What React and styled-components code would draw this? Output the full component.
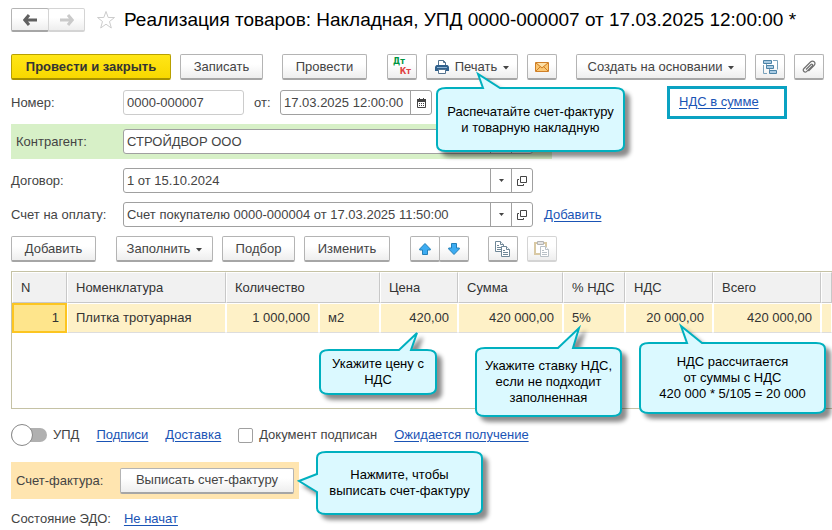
import React from 'react'
import styled, { createGlobalStyle, css } from 'styled-components'

function App() {
    return (
        <Page>
            <GlobalStyle />
            <TitleBar>
                <ButtonGroup>
                    <Button $w={38} $h={24} aria-label="Назад"><ArrowIcon color="#606060" /></Button>
                    <Button $w={37} $h={24} disabled aria-label="Вперед"><ArrowIcon color="#cacaca" flip /></Button>
                </ButtonGroup>
                <StarButton aria-label="В избранное">
                    <svg width="20" height="20" viewBox="0 0 20 20">
                        <path d="M10 1.5l2.2 6h6.3l-5 4 1.8 6.5-5.3-3.8-5.3 3.8 1.8-6.5-5-4h6.3z" fill="#fff" stroke="#ccc" />
                    </svg>
                </StarButton>
                <Title>Реализация товаров: Накладная, УПД 0000-000007 от 17.03.2025 12:00:00 *</Title>
            </TitleBar>

            <Toolbar>
                <PrimaryButton $w={160}>Провести и закрыть</PrimaryButton>
                <Button $w={83}>Записать</Button>
                <Button $w={85} $gap={10}>Провести</Button>
                <Button $w={30} $gap={11} aria-label="Проводки">
                    <Postings><b>Дт</b><i>Кт</i></Postings>
                </Button>
                <Anchor>
                    <Button $w={92}><PrinterIcon />Печать<Caret /></Button>
                    <Callout left={11} top={34} width={187} height={63} tail={[[46, 0], [41, -14], [63, 0]]}>
                        Распечатайте счет-фактуру<br />и товарную накладную
                    </Callout>
                </Anchor>
                <Button $w={30} aria-label="Отправить"><MailIcon /></Button>
                <Button $w={170} $gap={10}>Создать на основании<Caret /></Button>
                <Button $w={30} aria-label="Структура"><TreeIcon /></Button>
                <Button $w={30} aria-label="Вложения"><ClipIcon /></Button>
            </Toolbar>

            <FormRow>
                <Label htmlFor="number">Номер:</Label>
                <NumberInput id="number" defaultValue="0000-000007" />
                <ShortLabel htmlFor="date">от:</ShortLabel>
                <Field $w={152}>
                    <FieldInput id="date" defaultValue="17.03.2025 12:00:00" />
                    <FieldButton aria-label="Календарь"><CalendarIcon /></FieldButton>
                </Field>
                <TaxBox><Link href="#tax">НДС в сумме</Link></TaxBox>
            </FormRow>

            <PartnerRow>
                <Label htmlFor="partner">Контрагент:</Label>
                <Combo id="partner" value="СТРОЙДВОР ООО" />
            </PartnerRow>

            <FormRow>
                <Label htmlFor="contract">Договор:</Label>
                <Combo id="contract" value="1 от 15.10.2024" />
            </FormRow>

            <FormRow>
                <Label htmlFor="invoice">Счет на оплату:</Label>
                <Combo id="invoice" value="Счет покупателю 0000-000004 от 17.03.2025 11:50:00" />
                <Link href="#add">Добавить</Link>
            </FormRow>

            <Toolbar>
                <Button $w={85}>Добавить</Button>
                <Button $w={97} $gap={11}>Заполнить<Caret /></Button>
                <Button $w={73}>Подбор</Button>
                <Button $w={86}>Изменить</Button>
                <MoveGroup>
                    <Button $w={30} aria-label="Вверх"><MoveIcon /></Button>
                    <Button $w={30} aria-label="Вниз"><MoveIcon down /></Button>
                </MoveGroup>
                <Button $w={30} $gap={10} aria-label="Копировать"><CopyIcon /></Button>
                <Button $w={30} disabled aria-label="Вставить"><PasteIcon /></Button>
            </Toolbar>

            <Grid>
                <Table>
                    <colgroup>
                        <Col $w={55} /><Col $w={159} /><Col $w={93} /><Col $w={61} /><Col $w={78} />
                        <Col $w={105} /><Col $w={62} /><Col $w={88} /><Col $w={108} /><col />
                    </colgroup>
                    <thead>
                        <tr>
                            <Th>N</Th>
                            <Th>Номенклатура</Th>
                            <Th colSpan={2}>Количество</Th>
                            <Th>Цена</Th>
                            <Th>Сумма</Th>
                            <Th>% НДС</Th>
                            <Th>НДС</Th>
                            <Th>Всего</Th>
                            <Th aria-label="Прочее" />
                        </tr>
                    </thead>
                    <tbody>
                        <tr>
                            <Td $right $selected>1</Td>
                            <Td>Плитка тротуарная</Td>
                            <Td $right>1 000,000</Td>
                            <Td>м2</Td>
                            <Td $right>
                                420,00
                                <Callout left={-61} top={46} width={116} height={44} tail={[[79, 0], [97, -17], [91, 0]]}>
                                    Укажите цену с<br />НДС
                                </Callout>
                            </Td>
                            <Td $right>420 000,00</Td>
                            <Td>
                                5%
                                <Callout left={-88} top={44} width={145} height={68} tail={[[82, 0], [103, -20], [97, 0]]}>
                                    Укажите ставку НДС,<br />если не подходит<br />заполненная
                                </Callout>
                            </Td>
                            <Td $right>
                                20 000,00
                                <Callout left={14} top={39} width={185} height={70} tail={[[47, 0], [41, -17], [62, 0]]}>
                                    НДС рассчитается<br />от суммы с НДС<br />420 000 * 5/105 = 20 000
                                </Callout>
                            </Td>
                            <Td $right>420 000,00</Td>
                            <Td />
                        </tr>
                    </tbody>
                </Table>
            </Grid>

            <Options>
                <SwitchLabel><Switch type="checkbox" role="switch" />УПД</SwitchLabel>
                <Link href="#signs">Подписи</Link>
                <Link href="#delivery">Доставка</Link>
                <CheckLabel><Check type="checkbox" />Документ подписан</CheckLabel>
                <Link href="#pending">Ожидается получение</Link>
            </Options>

            <InvoiceRow>
                <span>Счет-фактура:</span>
                <Button $w={174}>Выписать счет-фактуру</Button>
                <Callout left={306} top={-10} width={165} height={62} tailSide="left" tail={[[0, 40], [-18, 29], [0, 22]]}>
                    Нажмите, чтобы<br />выписать счет-фактуру
                </Callout>
            </InvoiceRow>

            <Status>
                <span>Состояние ЭДО:</span>
                <Link href="#edo">Не начат</Link>
            </Status>
        </Page>
    )
}

export default App

function Combo({ id, value }) {
    return (
        <Field $w={410}>
            <FieldInput id={id} defaultValue={value} />
            <FieldButton aria-label="Выбрать">
                <svg width="5" height="3" viewBox="0 0 5 3"><path d="M0 0h5L2.5 3z" fill="#444" /></svg>
            </FieldButton>
            <FieldButton aria-label="Открыть">
                <svg width="10" height="10" viewBox="0 0 10 10" fill="none" stroke="#444">
                    <path d="M3.5 .5h6v6h-6zM2 3.5H.5v6h6V8" />
                </svg>
            </FieldButton>
        </Field>
    )
}

// speech bubble: rounded box with a pointer on its top or left side
function Callout({ left, top, width: w, height: h, tail, tailSide = 'top', children }) {
    const points = tail.map(p => p.join(' ')).join(' L')
    const topEdge = tailSide === 'top' ? `L${points}` : ''
    const leftEdge = tailSide === 'left' ? `L${points}` : ''
    const d = `M9 0 ${topEdge} L${w - 9} 0 Q${w} 0 ${w} 6 L${w} ${h - 6} Q${w} ${h} ${w - 9} ${h} L9 ${h} Q0 ${h} 0 ${h - 6} ${leftEdge} L0 6 Q0 0 9 0Z`
    return (
        <Bubble $left={left} $top={top} $w={w} $h={h}>
            <svg width={w} height={h}>
                <path d={d} fill="#dbf9ff" stroke="#00b0bf" strokeWidth="2" />
            </svg>
            <BubbleText>{children}</BubbleText>
        </Bubble>
    )
}

function Caret() {
    return <CaretSvg width="6" height="4" viewBox="0 0 6 4"><path d="M0 0h6L3 3.5z" fill="#444" /></CaretSvg>
}

function ArrowIcon({ color, flip }) {
    return (
        <svg width="14" height="12" viewBox="0 0 14 12">
            <path
                d="M6 1L1.8 6 6 11M2 6h12"
                transform={flip ? 'translate(14 0) scale(-1 1)' : undefined}
                fill="none" stroke={color} strokeWidth="3"
            />
        </svg>
    )
}

function PrinterIcon() {
    return (
        <svg width="14" height="14" viewBox="0 0 14 14">
            <path d="M3.5 6V.5h5l2 2V6" fill="#fff" stroke="#54738f" />
            <path d="M8.5 .5v2h2" fill="none" stroke="#54738f" />
            <path d="M1.5 5h11L14 6.500V11H0V6.5z" fill="#2f608c" />
            <path d="M2 7.5h10" stroke="#8db3d3" />
            <path d="M3.5 9.5h7v4h-7z" fill="#fff" stroke="#54738f" />
        </svg>
    )
}

function MailIcon() {
    return (
        <svg width="14" height="10" viewBox="0 0 14 10">
            <path d="M.5 .5h13v9H.5z" fill="#fbc671" stroke="#cf7f27" />
            <path d="M2 1h10L7 5z" fill="#fde0a8" />
            <path d="M1 1l6 5 6-5M1 9l4.500-4.500M13 9L8.500 4.500" fill="none" stroke="#cf7f27" />
        </svg>
    )
}

function TreeIcon() {
    return (
        <svg width="15" height="14" viewBox="0 0 15 14" fill="none" stroke="#4c83a6">
            <path d="M10 .5h4.5v9M4 13.5H.5V5M3.500 4v3h1M6.500 9v3h1" stroke="#7ba2bb" />
            <path d="M.5 .5h8v3h-8zM3.5 5.5h7v3h-7zM6.5 10.5h7v3h-7z" fill="#a9cbe3" />
        </svg>
    )
}

function ClipIcon() {
    return (
        <svg width="14" height="14" viewBox="0 0 14 14">
            <path
                d="M4 9.500l5-5c1-1 2.300.3 1.300 1.300l-5.500 5.500c-2 2-4.800-.6-2.800-2.800L8.500 2c2.600-2.500 6 .8 3.500 3.500l-5.500 5.600"
                fill="none" stroke="#707070" strokeWidth="1.2"
            />
        </svg>
    )
}

function CalendarIcon() {
    return (
        <svg width="9" height="10" viewBox="0 0 9 10">
            <path d="M.5 1.5h8v8h-8z" fill="#fff" stroke="#444" />
            <path d="M0 1h9v3H0zM2 0h1v2H2zM6 0h1v2H6z" fill="#444" />
            <path d="M2 5.5h5M2 7.5h5" stroke="#444" strokeDasharray="1 1" />
        </svg>
    )
}

function MoveIcon({ down }) {
    return (
        <svg width="12" height="12" viewBox="0 0 12 12">
            <path
                d="M6 .5l5.300 5.500v1H8.500v4.500h-5V7H.700V6z"
                transform={down ? 'rotate(180 6 6)' : undefined}
                fill="#3dacf2" stroke="#2480b8"
            />
        </svg>
    )
}

function CopyIcon() {
    return (
        <svg width="16" height="16" viewBox="0 0 16 16" fill="#fff" stroke="#6f8797">
            <path d="M.5 .5h5l3 3v7h-8z" />
            <path d="M5.500 .5v3h3M2 4.500h2M2 6.500h5M2 8.500h5" />
            <path d="M6.500 5.500h5l3 3v7h-8z" />
            <path d="M11.500 5.500v3h3M8 9.500h2M8 11.500h5M8 13.500h5" />
        </svg>
    )
}

function PasteIcon() {
    return (
        <svg width="16" height="16" viewBox="0 0 16 16" fill="#fff">
            <path d="M1 2h11v11H1z" stroke="#d9c9a4" strokeWidth="2" />
            <path d="M3.5 .5h6v3h-6z" fill="#e4e4e4" stroke="#b4b4b4" />
            <path d="M6.500 5.500h5l3 3v7h-8z" stroke="#b9c1c7" />
            <path d="M11.500 5.500v3h3M8 9.500h2M8 11.500h5M8 13.500h5" stroke="#b9c1c7" />
        </svg>
    )
}

const GlobalStyle = createGlobalStyle`
    * {
        box-sizing: border-box;
    }
    body {
        margin: 0;
        background: #fff;
        color: #444;
        font: 13px/16px "Liberation Sans", Arial, sans-serif;
    }
    button, input {
        font: inherit;
        color: inherit;
    }
`

const Page = styled.main`
    padding: 8px 0 0 11px;
    overflow: hidden;
`

const TitleBar = styled.header`
    display: flex;
    align-items: center;
`

const Title = styled.h1`
    margin: 0 0 0 8px;
    color: #000;
    font-size: 19px;
    font-weight: normal;
    line-height: 24px;
    white-space: nowrap;
`

const Toolbar = styled.div`
    display: flex;
    gap: 9px;
    margin-top: 9px;
    white-space: nowrap;

    ${TitleBar} + & {
        margin-top: 22px;
    }
`

const Button = styled.button`
    display: flex;
    flex: none;
    align-items: center;
    justify-content: center;
    gap: 6px;
    width: ${p => p.$w}px;
    height: ${p => p.$h || 26}px;
    margin-left: ${p => p.$gap || 0}px;
    padding: 0;
    border: 1px solid #b4b4b4;
    border-bottom: 2px solid #a6a6a6;
    border-radius: 2px;
    background: linear-gradient(#fff 40%, #eee);
    white-space: nowrap;
    cursor: pointer;

    &:disabled {
        border-color: #d4d4d4;
        cursor: default;
    }
`

const PrimaryButton = styled(Button)`
    border-color: #b8a000;
    border-bottom-color: #a89200;
    background: linear-gradient(#ffe617, #f8d800);
    color: #333;
    font-weight: bold;
`

const ButtonGroup = styled.div`
    display: flex;

    ${Button} + ${Button} {
        margin-left: -1px;
    }
`

const MoveGroup = styled(ButtonGroup)`
    margin-left: 11px;
`

const StarButton = styled.button`
    display: flex;
    margin-left: 11px;
    padding: 0;
    border: 0;
    background: none;
`

const CaretSvg = styled.svg`
    margin-top: 3px;
`

const Postings = styled.span`
    display: grid;
    width: 18px;
    font: bold 8px/10px "DejaVu Sans", sans-serif;

    b {
        color: #00963f;
        text-align: left;
    }
    i {
        color: #e04040;
        font-style: normal;
        text-align: right;
    }
`

const Anchor = styled.div`
    position: relative;
    z-index: 2;
`

const FormRow = styled.div`
    display: flex;
    align-items: center;
    height: 25px;
    margin-top: 9px;

    ${Toolbar} + & {
        margin-top: 10px;
    }
`

const PartnerRow = styled(FormRow)`
    max-width: 541px;
    height: 35px;
    padding-left: 5px;
    background: #d7f0c7;

    label {
        width: 107px;
    }
`

const Label = styled.label`
    flex: none;
    width: 112px;
`

const ShortLabel = styled.label`
    margin: 0 10px;
    width: 16px;
`

const inputBox = css`
    height: 25px;
    border: 1px solid #a0a0a0;
    border-radius: 3px;
    background: #fff;
`

const NumberInput = styled.input`
    ${inputBox}
    width: 121px;
    padding: 0 3px;
    border-color: #ccc;
`

const Field = styled.div`
    ${inputBox}
    display: flex;
    flex: 0 1 ${p => p.$w}px;
    overflow: hidden;

    & + a {
        margin-left: 11px;
    }
`

const FieldInput = styled.input`
    flex: 1;
    min-width: 0;
    padding: 0 3px;
    border: 0;
    background: none;
`

const FieldButton = styled.button`
    display: flex;
    align-items: center;
    justify-content: center;
    width: 21px;
    padding: 0;
    border: 0;
    border-left: 1px solid #a0a0a0;
    background: none;
`

const Link = styled.a`
    color: #1a54b5;
    text-decoration: underline;
    text-underline-offset: 2px;
    white-space: nowrap;
`

const TaxBox = styled.div`
    flex: none;
    width: 120px;
    height: 33px;
    margin-left: 235px;
    padding: 5px 9px;
    border: 3px solid #0aa2c2;
`

const Grid = styled.div`
    height: 138px;
    margin-top: 9px;
    border: 1px solid #c5c2a5;
    border-right: 0;
`

const Table = styled.table`
    width: 100%;
    table-layout: fixed;
    border-collapse: separate;
    border-spacing: 0;
    color: #333;
`

const Col = styled.col`
    width: ${p => p.$w}px;
`

const Th = styled.th`
    height: 31px;
    padding: 0 8px;
    border: 1px solid #fff;
    border-right-color: #c8c8c8;
    border-bottom-color: #c8c8c8;
    background: #f1f1f1;
    font-weight: normal;
    text-align: left;
    white-space: nowrap;
`

const Td = styled.td`
    position: relative;
    height: 30px;
    padding: 0 8px;
    border: 1px solid #fff;
    border-bottom-color: #ddd;
    background: #fef1c7;
    text-align: ${p => (p.$right ? 'right' : 'left')};
    white-space: nowrap;

    ${p => p.$selected && css`
        padding: 0 6px;
        border: 2px solid #fcc521;
        background: #fee58c;
    `}
`

const Bubble = styled.div`
    position: absolute;
    z-index: 3;
    left: ${p => p.$left}px;
    top: ${p => p.$top}px;
    display: flex;
    align-items: center;
    justify-content: center;
    width: ${p => p.$w}px;
    height: ${p => p.$h}px;
    color: #000;

    svg {
        position: absolute;
        inset: 0;
        overflow: visible;
        filter: drop-shadow(5px 5px 2px rgba(0, 0, 0, 0.45));
    }
`

const BubbleText = styled.span`
    position: relative;
    text-align: center;
    white-space: nowrap;
`

const Options = styled.div`
    display: flex;
    align-items: center;
    gap: 17px;
    height: 22px;
    margin-top: 15px;
    white-space: nowrap;
`

const SwitchLabel = styled.label`
    display: flex;
    align-items: center;
    gap: 6px;
`

const Switch = styled.input`
    appearance: none;
    display: flex;
    align-items: center;
    width: 36px;
    height: 14px;
    margin: 0;
    border-radius: 7px;
    background: #b0b0b0;

    &::before {
        content: '';
        width: 20px;
        height: 20px;
        flex: none;
        border: 1px solid #888;
        border-radius: 50%;
        background: #fff;
    }
    &:checked {
        justify-content: flex-end;
    }
`

const CheckLabel = styled(SwitchLabel)``

const Check = styled.input`
    appearance: none;
    width: 15px;
    height: 15px;
    margin: 0;
    border: 1px solid #a0a0a0;
    border-radius: 2px;
    background: #fff;

    &:checked {
        background: #1a54b5;
    }
`

const InvoiceRow = styled.div`
    position: relative;
    display: flex;
    align-items: center;
    justify-content: space-between;
    max-width: 288px;
    height: 37px;
    margin-top: 16px;
    padding: 0 5px;
    background: #ffe5b0;
    white-space: nowrap;
`

const Status = styled.div`
    display: flex;
    gap: 13px;
    margin-top: 12px;
`
